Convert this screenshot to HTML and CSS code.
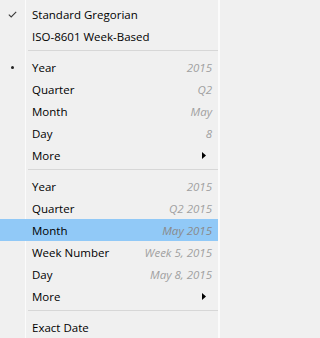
FILE: index.html
```html
<!DOCTYPE html>
<html>
<head>
<meta charset="utf-8">
<link rel="stylesheet" href="styles.css">
</head>
<body>
<div class="menu">
  <div class="item"><span class="mark"><svg width="9" height="7" viewBox="0 0 9 7"><path d="M0.8 3.6 L3.2 6 L8.2 0.8" fill="none" stroke="#3a3a3a" stroke-width="1.1"/></svg></span><span class="label">Standard Gregorian</span></div>
  <div class="item"><span class="mark"></span><span class="label">ISO-8601 Week-Based</span></div>
  <div class="sep"></div>
  <div class="item"><span class="mark"><span class="dot"></span></span><span class="label">Year</span><span class="value">2015</span></div>
  <div class="item"><span class="mark"></span><span class="label">Quarter</span><span class="value">Q2</span></div>
  <div class="item"><span class="mark"></span><span class="label">Month</span><span class="value">May</span></div>
  <div class="item"><span class="mark"></span><span class="label">Day</span><span class="value">8</span></div>
  <div class="item"><span class="mark"></span><span class="label">More</span><span class="arrow"><svg width="4" height="7" viewBox="0 0 4 7"><path d="M0 0 L4 3.5 L0 7 Z" fill="#000"/></svg></span></div>
  <div class="sep"></div>
  <div class="item"><span class="mark"></span><span class="label">Year</span><span class="value">2015</span></div>
  <div class="item"><span class="mark"></span><span class="label">Quarter</span><span class="value">Q2 2015</span></div>
  <div class="item active"><span class="mark"></span><span class="label">Month</span><span class="value">May 2015</span></div>
  <div class="item"><span class="mark"></span><span class="label">Week Number</span><span class="value">Week 5, 2015</span></div>
  <div class="item"><span class="mark"></span><span class="label">Day</span><span class="value">May 8, 2015</span></div>
  <div class="item"><span class="mark"></span><span class="label">More</span><span class="arrow"><svg width="4" height="7" viewBox="0 0 4 7"><path d="M0 0 L4 3.5 L0 7 Z" fill="#000"/></svg></span></div>
  <div class="sep"></div>
  <div class="item"><span class="mark"></span><span class="label">Exact Date</span></div>
</div>
</body>
</html>
```
FILE: styles.css
```css
html, body {
  margin: 0;
  padding: 0;
  background: #f0f0f0;
}
.menu {
  width: 220px;
  height: 338px;
  box-sizing: border-box;
  padding-top: 3px;
  border-right: 2px solid #fbfbfb;
  background: #f0f0f0 linear-gradient(to right, transparent 25px, #fbfbfb 25px, #fbfbfb 26px, transparent 26px);
  font-family: "Open Sans", "Noto Sans", sans-serif;
  font-size: 11.5px;
  color: #000;
  display: flex;
  flex-direction: column;
}
.item {
  height: 22px;
  display: flex;
  align-items: center;
  padding-right: 6px;
}
.item.active {
  background: #91c9f7;
}
.mark {
  width: 32px;
  flex: none;
  display: flex;
  justify-content: center;
  padding-right: 8px;
  box-sizing: border-box;
}
.mark svg {
  display: block;
}
.dot {
  width: 3px;
  height: 3px;
  border-radius: 50%;
  background: #222;
}
.label {
  flex: 1;
  white-space: nowrap;
}
.value {
  font-style: italic;
  color: #a0a0a0;
  white-space: nowrap;
}
.active .value {
  color: #8a8a8a;
}
.arrow {
  display: flex;
  padding-right: 6px;
}
.sep {
  height: 1px;
  margin: 3px 0 5px 28px;
  background: #d7d7d7;
}
```
